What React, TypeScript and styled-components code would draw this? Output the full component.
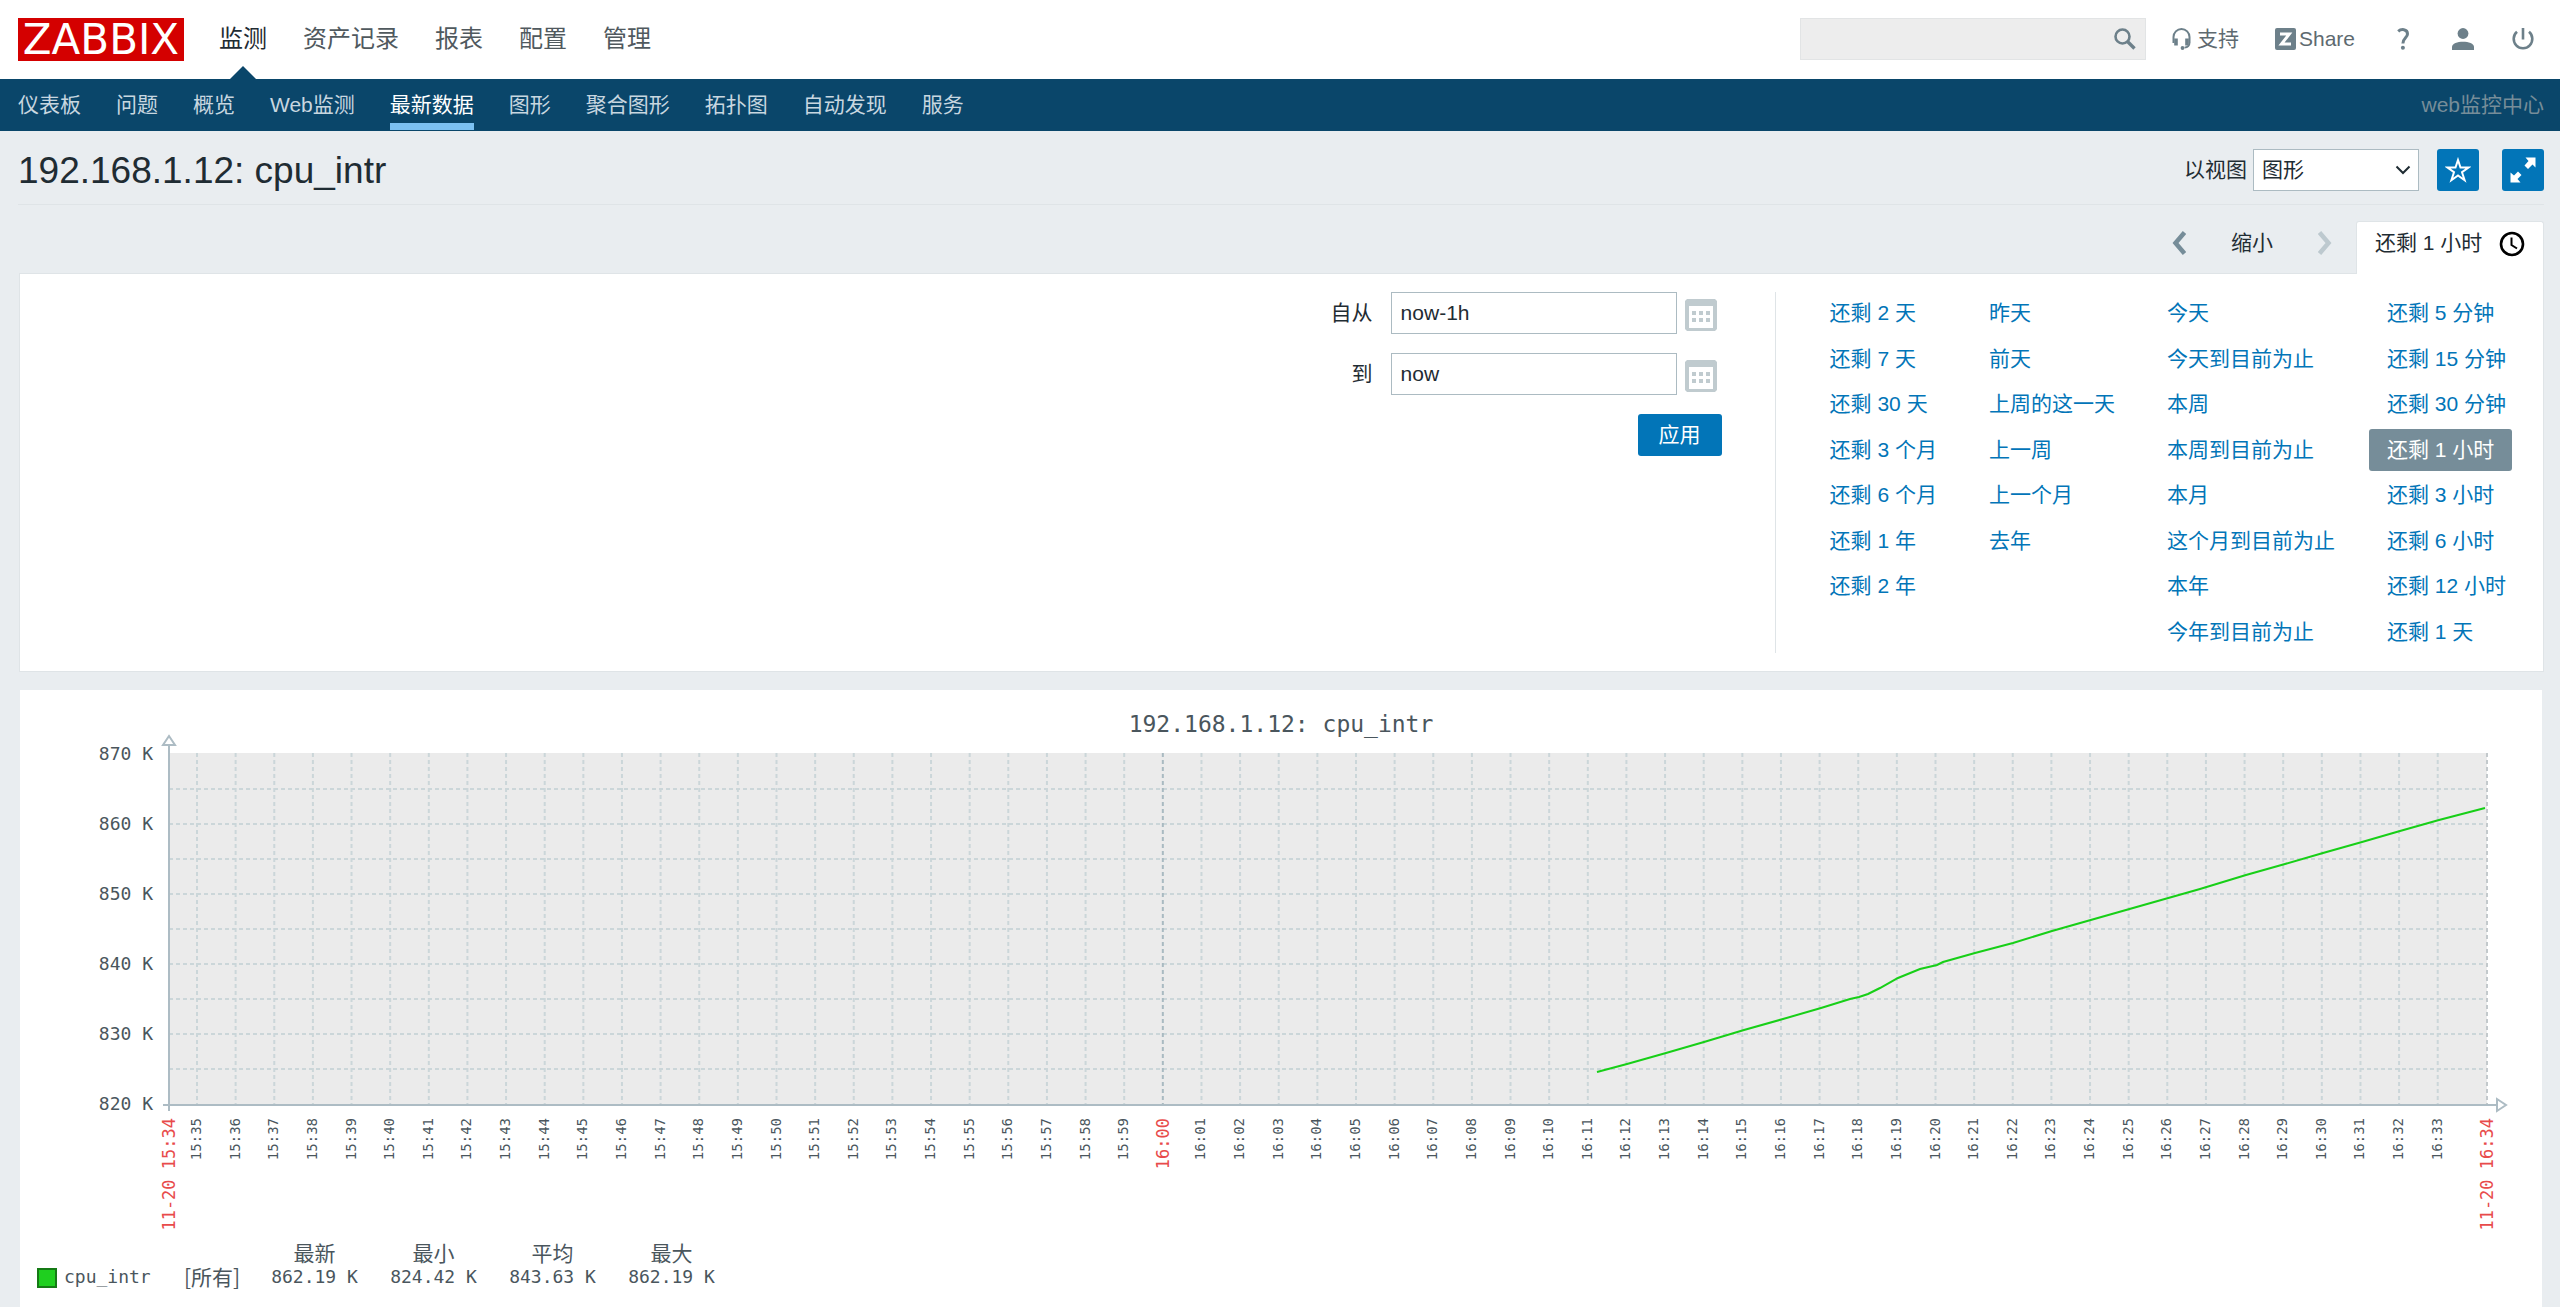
import React from "react";
import styled, { createGlobalStyle } from "styled-components";

const sans = `"Liberation Sans", "Noto Sans CJK SC", sans-serif`;
const mono = `"DejaVu Sans Mono", "Noto Sans CJK SC", monospace`;

const color = {
  text: "#1f2c33",
  nav: "#0a466a",
  accent: "#0275b8",
  line: "#dfe4e7",
  page: "#e9edf0",
  icon: "#6d808a",
  muted: "#768d99",
  input: "#acbbc2",
  chartText: "#4a565d",
  chartRed: "#e84b4b",
};

const GlobalStyle = createGlobalStyle`
  *, *::before, *::after { box-sizing: border-box; }
  body {
    margin: 0;
    background: ${color.page};
    color: ${color.text};
    font: 21px/24px ${sans};
  }
  button, input, select { font: inherit; color: inherit; margin: 0; }
  button { cursor: pointer; }
  a { text-decoration: none; color: inherit; }
`;

const Page = styled.div`
  display: flex;
  flex-direction: column;
  min-height: 100vh;
`;

const Header = styled.header`
  display: flex;
  align-items: center;
  height: 79px;
  padding: 0 25px 1px 18px;
  background: #fff;
`;

const Logo = styled.a`
  width: 166px;
  height: 43px;
  margin-right: 35px;
  background: #d40000;
  color: #fff;
  font: 42px/43px "DejaVu Sans", sans-serif;
  text-align: center;
`;

const TopNav = styled.nav`
  display: flex;
  flex: 1;
  gap: 36px;
  height: 100%;
`;

const TopLink = styled.a<{ $active?: boolean }>`
  position: relative;
  font-size: 24px;
  line-height: 77px;
  color: ${(p) => (p.$active ? color.text : "#50595e")};
  &::after {
    content: "";
    display: ${(p) => (p.$active ? "block" : "none")};
    position: absolute;
    bottom: -1px;
    left: calc(50% - 13px);
    border: 13px solid transparent;
    border-top: 0;
    border-bottom-color: ${color.nav};
  }
`;

const HeaderTools = styled.div`
  display: flex;
  align-items: center;
  gap: 36px;
`;

const Search = styled.form`
  position: relative;
  width: 346px;
  margin-right: -10px;
`;

const SearchInput = styled.input`
  display: block;
  width: 100%;
  height: 42px;
  padding: 0 42px 0 9px;
  border: 1px solid #e2e4e5;
  background: #ededed;
`;

const SearchButton = styled.button`
  position: absolute;
  top: 0;
  right: 0;
  display: grid;
  place-items: center;
  width: 42px;
  height: 42px;
  padding: 0;
  border: 0;
  background: none;
`;

const ToolLink = styled.a<{ $gap?: number }>`
  display: flex;
  align-items: center;
  gap: ${(p) => p.$gap ?? 0}px;
  color: #5e6a70;
`;

const SubNav = styled.nav`
  display: flex;
  gap: 35px;
  height: 52px;
  padding: 0 16px 0 18px;
  background: ${color.nav};
  line-height: 52px;
`;

const SubLink = styled.a<{ $active?: boolean }>`
  height: 51px;
  color: ${(p) => (p.$active ? "#fff" : "#c8d7e0")};
  border-bottom: 7px solid ${(p) => (p.$active ? "#7cc1f2" : "transparent")};
`;

const ServerName = styled.span`
  margin-left: auto;
  color: ${color.muted};
`;

const Main = styled.main`
  display: flex;
  flex-direction: column;
  flex: 1;
  padding: 0 16px 0 18px;
`;

const TitleRow = styled.div`
  display: flex;
  align-items: center;
  padding: 18px 0 13px;
  border-bottom: 1px solid ${color.line};
`;

const Title = styled.h1`
  flex: 1;
  margin: 0;
  font-size: 37px;
  line-height: 44px;
  height: 42px;
  font-weight: 400;
`;

const SelectLabel = styled.label`
  margin-right: 6px;
`;

const SelectBox = styled.div`
  position: relative;
  width: 166px;
  svg {
    position: absolute;
    top: 16px;
    right: 8px;
    pointer-events: none;
  }
`;

const Select = styled.select`
  width: 100%;
  height: 42px;
  display: block;
  padding: 0 8px;
  border: 1px solid ${color.input};
  border-radius: 0;
  background: #fff;
  appearance: none;
`;

const IconButton = styled.button<{ $space: number }>`
  display: grid;
  place-items: center;
  width: 42px;
  height: 42px;
  margin-left: ${(p) => p.$space}px;
  padding: 0;
  border: 0;
  border-radius: 3px;
  background: ${color.accent};
`;

const TimeNav = styled.div`
  display: flex;
  justify-content: flex-end;
  margin-top: 16px;
`;

const TimeButton = styled.button<{ $width: number }>`
  display: grid;
  place-items: center;
  width: ${(p) => p.$width}px;
  height: 43px;
  padding: 0;
  border: 0;
  background: none;
`;

const TimeTab = styled.a`
  position: relative;
  display: flex;
  align-items: flex-start;
  justify-content: space-between;
  width: 188px;
  height: 53px;
  margin: 0 0 -1px 10px;
  padding: 9px 18px;
  border: 1px solid ${color.line};
  border-bottom: 0;
  border-radius: 3px 3px 0 0;
  background: #fff;
`;

const FilterPanel = styled.section`
  display: flex;
  justify-content: flex-end;
  margin-left: 1px;
  padding: 18px 19px 18px 18px;
  border: 1px solid ${color.line};
  background: #fff;
`;

const RangeForm = styled.form`
  display: grid;
  grid-template-columns: auto 286px 45px;
  align-content: start;
  row-gap: 19px;
  margin-right: 53px;
`;

const RangeLabel = styled.label`
  padding-right: 18px;
  line-height: 42px;
  text-align: right;
`;

const RangeInput = styled.input`
  height: 42px;
  padding: 0 9px;
  border: 1px solid ${color.input};
  background: #fff;
`;

const CalendarButton = styled.button`
  display: flex;
  align-items: center;
  height: 42px;
  padding: 4px 0 0 8px;
  border: 0;
  background: none;
`;

const ApplyButton = styled.button`
  grid-column: 1 / -1;
  justify-self: end;
  width: 84px;
  height: 42px;
  padding: 0;
  border: 0;
  border-radius: 3px;
  background: ${color.accent};
  color: #fff;
`;

const Presets = styled.div`
  display: flex;
  gap: 16px;
  height: 361px;
  padding-left: 36px;
  border-left: 1px solid ${color.line};
`;

const PresetColumn = styled.div`
  display: grid;
  grid-template-rows: repeat(8, 42px);
  align-content: space-between;
  justify-items: start;
`;

const PresetLink = styled.a<{ $active?: boolean }>`
  padding: 0 18px;
  border-radius: 3px;
  line-height: 42px;
  color: ${(p) => (p.$active ? "#fff" : color.accent)};
  background: ${(p) => (p.$active ? color.muted : "transparent")};
`;

const ChartPanel = styled.section`
  flex: 1;
  margin: 18px 2px 0;
  background: #fff;
`;

const Chart = styled.svg`
  display: block;
  width: 100%;
  height: auto;
  font-family: ${mono};
`;

const Legend = styled.table`
  margin-left: 17px;
  border-collapse: collapse;
  table-layout: fixed;
  width: 694px;
  color: ${color.chartText};
  font: 18px/25px ${mono};
  th, td { height: 25px; padding: 0; font-weight: 400; text-align: center; }
  th { font-size: 21px; line-height: 20px; vertical-align: bottom; }
`;

const LegendName = styled.td`
  && { text-align: left; }
`;

const LegendScope = styled.td`
  && { font: 21px/25px "Noto Sans CJK SC", sans-serif; text-align: left; }
`;

const Swatch = styled.span`
  display: inline-block;
  width: 20px;
  height: 20px;
  margin-right: 7px;
  border: 2px solid #157a15;
  background: #1fcf1f;
  vertical-align: middle;
`;

const topItems = ["监测", "资产记录", "报表", "配置", "管理"];
const subItems = ["仪表板", "问题", "概览", "Web监测", "最新数据", "图形", "聚合图形", "拓扑图", "自动发现", "服务"];
const presets = [
  ["还剩 2 天", "还剩 7 天", "还剩 30 天", "还剩 3 个月", "还剩 6 个月", "还剩 1 年", "还剩 2 年"],
  ["昨天", "前天", "上周的这一天", "上一周", "上一个月", "去年"],
  ["今天", "今天到目前为止", "本周", "本周到目前为止", "本月", "这个月到目前为止", "本年", "今年到目前为止"],
  ["还剩 5 分钟", "还剩 15 分钟", "还剩 30 分钟", "还剩 1 小时", "还剩 3 小时", "还剩 6 小时", "还剩 12 小时", "还剩 1 天"],
];
const stats = [
  ["最新", "862.19 K"],
  ["最小", "824.42 K"],
  ["平均", "843.63 K"],
  ["最大", "862.19 K"],
];

const CalendarIcon = () => (
  <svg width="32" height="32" viewBox="0 0 32 32" aria-hidden="true">
    <path fill="#c0cbcf" fillRule="evenodd" d="M2 0h28l2 2v28l-2 2H2l-2-2V2zM4 7v22h24V7z" />
    <path fill="#c0cbcf" d="M7 12h4v4H7zm7 0h4v4h-4zm7 0h4v4h-4zM7 19h4v4H7zm7 0h4v4h-4zm7 0h4v4h-4z" />
  </svg>
);

/* Chart geometry, in the units of its viewBox */
const WIDTH = 2522;
const HEIGHT = 549;
const LEFT = 149;
const RIGHT = 2467;
const TOP = 63;
const BASE = 415;
const STEP_Y = 35;
const minuteX = (m: number) => LEFT + 28 + (m * (RIGHT - LEFT)) / 60;

const series = [
  [1577, 382], [1607, 374], [1646, 363], [1684, 352], [1724, 340], [1763, 329], [1801, 318], [1830, 309],
  [1839, 307], [1848, 304], [1860, 298], [1878, 288], [1900, 279], [1917, 275], [1923, 272], [1955, 263],
  [1993, 253], [2032, 241], [2180, 199], [2226, 185], [2265, 174], [2303, 163], [2342, 152], [2380, 141],
  [2419, 130], [2465, 118],
];

function minuteLabel(m: number) {
  const total = 35 + m;
  const hour = 15 + Math.floor(total / 60);
  return `${hour}:${String(total % 60).padStart(2, "0")}`;
}

function CpuChart() {
  const minutes = Array.from({ length: 59 }, (_, i) => i);
  const rows = Array.from({ length: 9 }, (_, i) => TOP + STEP_Y * (i + 1) + 1);
  return (
    <Chart viewBox={`0 0 ${WIDTH} ${HEIGHT}`} role="img" aria-label="192.168.1.12: cpu_intr">
      <text x={WIDTH / 2} y="42" fontSize="23" fill={color.chartText} textAnchor="middle">
        192.168.1.12: cpu_intr
      </text>
      <rect x={LEFT} y={TOP} width={RIGHT - LEFT} height={BASE - TOP} fill="#ebebeb" />
      <g stroke="#cbd6d9" strokeWidth="2" strokeDasharray="4 3">
        {rows.map((y) => (
          <line key={y} x1={LEFT} x2={RIGHT} y1={y} y2={y} />
        ))}
        {minutes.map((m) => (
          <line key={m} x1={minuteX(m)} x2={minuteX(m)} y1={TOP} y2={BASE} stroke={m === 25 ? "#a9bac1" : undefined} />
        ))}
        <line x1={RIGHT} x2={RIGHT} y1={TOP} y2={BASE} stroke="#c3c9cc" />
      </g>
      <g stroke="#adbcc4" strokeWidth="2" fill="#fff">
        <path d={`M${LEFT} 56V421M143 ${BASE}H2477`} />
        <path d={`M143 55h12l-6-9zM2477 ${BASE - 6}v12l9-6z`} />
      </g>
      <polyline
        points={series.map((p) => p.join(",")).join(" ")}
        fill="none"
        stroke="#17cf17"
        strokeWidth="2"
      />
      {[870, 860, 850, 840, 830, 820].map((v, i) => (
        <text key={v} x="133" y={TOP + 7 + i * STEP_Y * 2} fontSize="18" fill={color.chartText} textAnchor="end">
          {v} K
        </text>
      ))}
      {minutes.map((m) => (
        <text
          key={m}
          transform={`translate(${minuteX(m) + (m === 25 ? 6 : 4)} 428) rotate(-90)`}
          fontSize={m === 25 ? 17 : 14}
          fill={m === 25 ? color.chartRed : color.chartText}
          textAnchor="end"
        >
          {minuteLabel(m)}
        </text>
      ))}
      {[["11-20 15:34", LEFT], ["11-20 16:34", RIGHT]].map(([label, x]) => (
        <text
          key={label}
          transform={`translate(${Number(x) + 6} 428) rotate(-90)`}
          fontSize="17"
          fill={color.chartRed}
          textAnchor="end"
        >
          {label}
        </text>
      ))}
    </Chart>
  );
}

export default function App() {
  return (
    <Page>
      <GlobalStyle />
      <Header>
        <Logo href="#">ZABBIX</Logo>
        <TopNav>
          {topItems.map((item, i) => (
            <TopLink key={item} href="#" $active={i === 0}>{item}</TopLink>
          ))}
        </TopNav>
        <HeaderTools>
          <Search>
            <SearchInput type="text" aria-label="搜索" />
            <SearchButton type="button" aria-label="搜索">
              <svg width="22" height="22" viewBox="0 0 22 22" fill="none" stroke={color.icon}>
                <circle cx="8.5" cy="8.5" r="7" strokeWidth="2.6" />
                <path d="M13.5 13.5l7 7" strokeWidth="3.4" />
              </svg>
            </SearchButton>
          </Search>
          <ToolLink href="#" $gap={6}>
            <svg width="19" height="22" viewBox="0 0 19 22" fill="none" stroke={color.icon}>
              <path d="M1.5 15V9a8 8 0 0 1 16 0v6" strokeWidth="2" />
              <path d="M4 10.500v7M15 10.500v7" strokeWidth="3.600" />
              <path d="M17.500 15c0 3-2 4.300-5 4.700" strokeWidth="1.800" />
              <circle cx="10.500" cy="20" r="1.900" fill={color.icon} stroke="none" />
            </svg>
            支持
          </ToolLink>
          <ToolLink href="#" $gap={3}>
            <svg width="21" height="22" viewBox="0 0 21 22">
              <rect width="21" height="22" rx="2" fill={color.icon} />
              <path d="M5 6h9.300L6.500 16h9.500" fill="none" stroke="#fff" strokeWidth="3" />
            </svg>
            Share
          </ToolLink>
          <ToolLink href="#" aria-label="帮助">
            <svg width="24" height="22" viewBox="0 0 24 22" fill="none" stroke={color.icon}>
              <path d="M7.200 3.400C10 .8 16.500.6 16.500 6c0 3.800-4.600 4-4.600 9.500" strokeWidth="3" />
              <circle cx="11.900" cy="19.800" r="2" fill={color.icon} stroke="none" />
            </svg>
          </ToolLink>
          <ToolLink href="#" aria-label="用户">
            <svg width="24" height="22" viewBox="0 0 24 22" fill={color.icon}>
              <circle cx="12" cy="5.500" r="5.400" />
              <path d="M1 22v-3c0-7 22-7 22 0v3z" />
            </svg>
          </ToolLink>
          <ToolLink href="#" aria-label="退出">
            <svg width="24" height="22" viewBox="0 0 24 22" fill="none" stroke={color.icon} strokeWidth="2.600">
              <path d="M6 3.800a9.300 9.300 0 1 0 12 0M12 0v11.500" />
            </svg>
          </ToolLink>
        </HeaderTools>
      </Header>

      <SubNav>
        {subItems.map((item) => (
          <SubLink key={item} href="#" $active={item === "最新数据"}>{item}</SubLink>
        ))}
        <ServerName>web监控中心</ServerName>
      </SubNav>

      <Main>
        <TitleRow>
          <Title>192.168.1.12: cpu_intr</Title>
          <SelectLabel htmlFor="view-as">以视图</SelectLabel>
          <SelectBox>
            <Select id="view-as" defaultValue="graph">
              <option value="graph">图形</option>
            </Select>
            <svg width="16" height="10" viewBox="0 0 16 10" fill="none" stroke={color.text} strokeWidth="2">
              <path d="M1.500 1.500L8 8l6.500-6.500" />
            </svg>
          </SelectBox>
          <IconButton type="button" aria-label="收藏" $space={18}>
            <svg width="26" height="26" viewBox="0 0 26 26" fill="none" stroke="#fff" strokeWidth="2">
              <path d="M13 3l2.500 7.500h8L17 15.200l2.600 8L13 18.400l-6.600 4.800 2.600-8-6.500-4.700h8z" />
            </svg>
          </IconButton>
          <IconButton type="button" aria-label="全屏" $space={23}>
            <svg width="26" height="26" viewBox="0 0 26 26" fill="#fff">
              <path d="M15.500 0.500H25.500V10.500L22.500 7.500L18 12L14.500 8.500L18.500 4z" />
              <path d="M0.500 15.500L4 18.500L8 14.500L11.500 18L7.500 22L10.500 25.500H0.500z" />
            </svg>
          </IconButton>
        </TitleRow>

        <TimeNav>
          <TimeButton type="button" aria-label="后退" $width={42}>
            <svg width="14" height="24" viewBox="0 0 14 24" fill="none" stroke={color.muted} strokeWidth="4.500">
              <path d="M12.500 1.500L3.500 12l9 10.500" />
            </svg>
          </TimeButton>
          <TimeButton type="button" $width={104}>缩小</TimeButton>
          <TimeButton type="button" aria-label="前进" disabled $width={42}>
            <svg width="14" height="24" viewBox="0 0 14 24" fill="none" stroke="#bdc9cf" strokeWidth="4.500">
              <path d="M1.500 1.500l9 10.500-9 10.500" />
            </svg>
          </TimeButton>
          <TimeTab href="#">
            还剩 1 小时
            <svg width="26" height="26" viewBox="0 0 26 26" fill="none" stroke="#000">
              <circle cx="13" cy="13" r="11" strokeWidth="2.600" />
              <path d="M12.500 6.500V14l5.500 3.500" strokeWidth="2" />
            </svg>
          </TimeTab>
        </TimeNav>

        <FilterPanel>
          <RangeForm>
            <RangeLabel htmlFor="from">自从</RangeLabel>
            <RangeInput id="from" type="text" defaultValue="now-1h" />
            <CalendarButton type="button" aria-label="选择开始日期"><CalendarIcon /></CalendarButton>
            <RangeLabel htmlFor="to">到</RangeLabel>
            <RangeInput id="to" type="text" defaultValue="now" />
            <CalendarButton type="button" aria-label="选择结束日期"><CalendarIcon /></CalendarButton>
            <ApplyButton type="button">应用</ApplyButton>
          </RangeForm>
          <Presets>
            {presets.map((column) => (
              <PresetColumn key={column[0]}>
                {column.map((item) => (
                  <PresetLink key={item} href="#" $active={item === "还剩 1 小时"}>{item}</PresetLink>
                ))}
              </PresetColumn>
            ))}
          </Presets>
        </FilterPanel>

        <ChartPanel>
          <CpuChart />
          <Legend>
            <colgroup>
              <col width="147" />
              <col width="71" />
              <col width="119" />
              <col width="119" />
              <col width="119" />
              <col width="119" />
            </colgroup>
            <thead>
              <tr>
                <td />
                <td />
                {stats.map(([name]) => <th key={name} scope="col">{name}</th>)}
              </tr>
            </thead>
            <tbody>
              <tr>
                <LegendName><Swatch />cpu_intr</LegendName>
                <LegendScope>[所有]</LegendScope>
                {stats.map(([name, value]) => <td key={name}>{value}</td>)}
              </tr>
            </tbody>
          </Legend>
        </ChartPanel>
      </Main>
    </Page>
  );
}
